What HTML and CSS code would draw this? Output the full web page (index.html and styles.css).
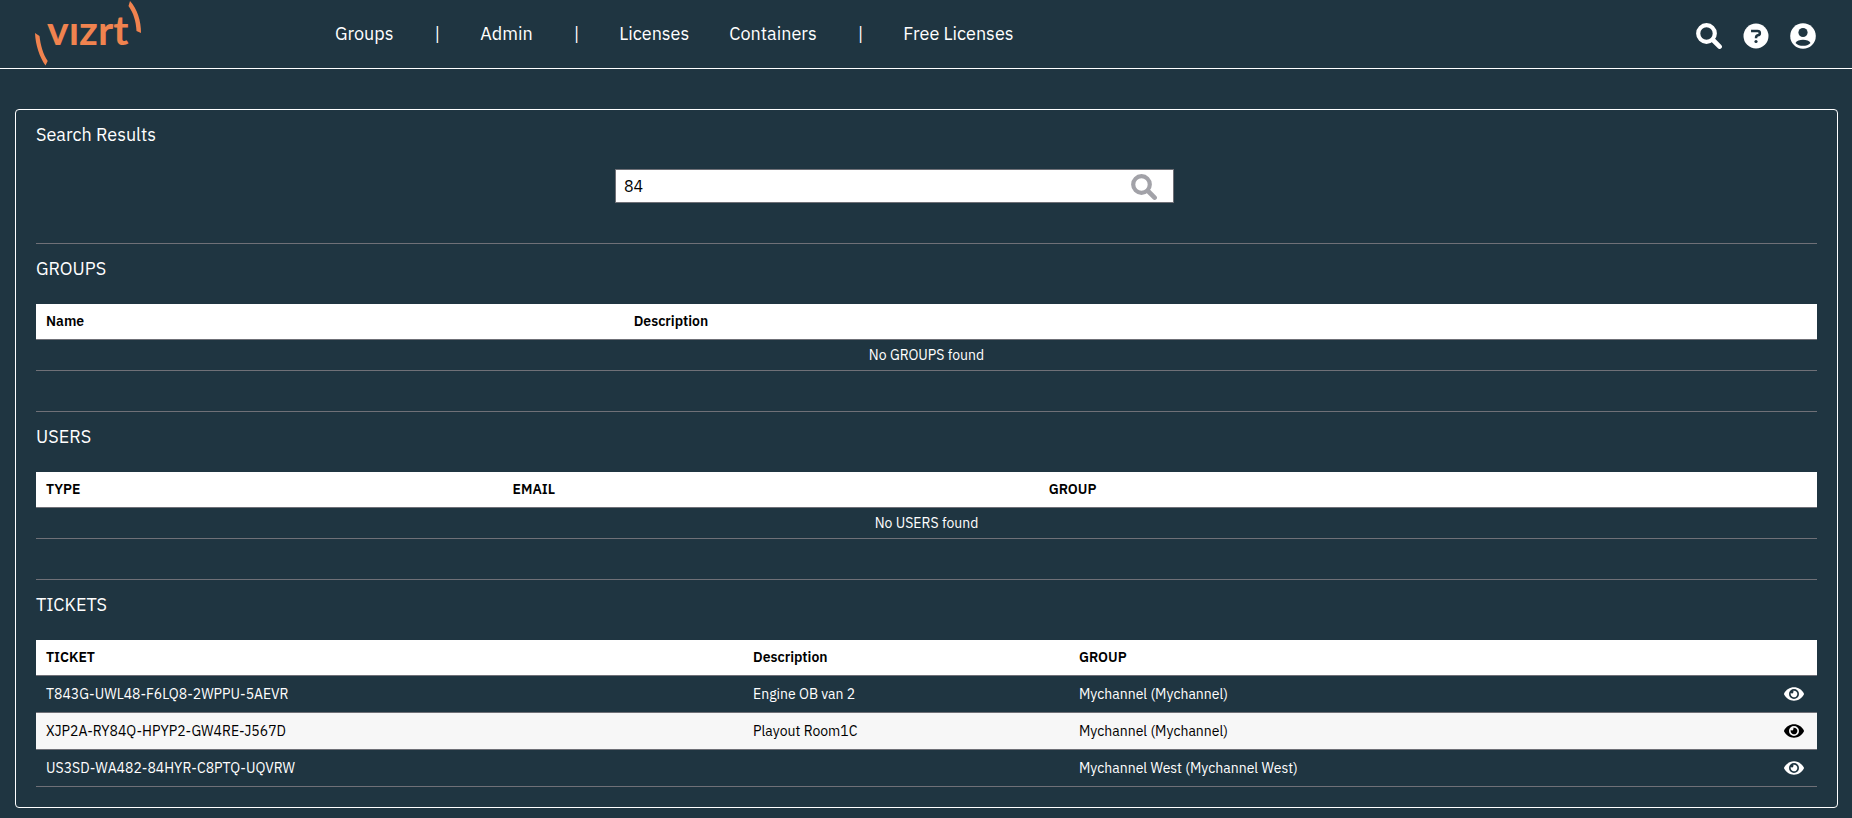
FILE: index.html
```html
<!DOCTYPE html>
<html lang="en">
<head>
<meta charset="utf-8">
<title>Search Results</title>
<link rel="stylesheet" href="styles.css">
</head>
<body>
<svg class="defs" aria-hidden="true">
  <symbol id="search" viewBox="0 0 26 26"><circle cx="10.5" cy="10.5" r="8.3" fill="none" stroke="currentColor" stroke-width="4.2"/><path d="M17 17l6.600 6.600" fill="none" stroke="currentColor" stroke-width="4.600" stroke-linecap="round"/></symbol>
  <symbol id="eye" viewBox="0 0 576 512"><path fill="currentColor" d="M572.520 241.400C518.290 135.590 410.930 64 288 64S57.680 135.640 3.480 241.410a32.350 32.350 0 0 0 0 29.190C57.710 376.410 165.070 448 288 448s230.320-71.640 284.520-177.410a32.350 32.350 0 0 0 0-29.190zM288 400a144 144 0 1 1 144-144 143.930 143.930 0 0 1-144 144zm0-240a95.310 95.310 0 0 0-25.310 3.790 47.850 47.850 0 0 1-66.900 66.900A95.780 95.780 0 1 0 288 160z"/></symbol>
</svg>
<header class="topbar">
  <a class="logo" href="#" aria-label="vizrt">
    <svg width="108" height="68" viewBox="0 0 108 68">
      <path d="M0 33L4.500 36C5.500 45 8 54 12.700 61L10.500 65.500C4.500 57 .5 45 0 33Z"/>
      <path d="M95 1L93.500 6C98.500 13 101 21 101.500 31L106 33C106.200 21 102 8.500 95 1Z"/>
      <text x="12" y="45">vızrt</text>
    </svg>
  </a>
  <nav class="nav">
    <a href="#">Groups</a><span>|</span>
    <a href="#">Admin</a><span>|</span>
    <a href="#">Licenses</a>
    <a href="#">Containers</a><span>|</span>
    <a href="#">Free Licenses</a>
  </nav>
  <div class="actions">
    <button aria-label="Search"><svg class="icon"><use href="#search"/></svg></button>
    <button aria-label="Help"><svg class="icon" viewBox="0 0 26 26"><circle cx="13" cy="13" r="12.500" fill="currentColor"/><path class="cut-line" d="M9.300 9.300V8H14.500C17.600 8 17.600 12 14.800 12.300C13.500 12.500 13 13 13 15.200"/><circle class="cut" cx="13" cy="18.500" r="1.600"/></svg></button>
    <button aria-label="Account"><svg class="icon" viewBox="0 0 26 26"><circle cx="13" cy="13" r="12.800" fill="currentColor"/><circle class="cut" cx="13" cy="9.500" r="4.600"/><path class="cut" d="M5.500 20C7.500 15.800 18.500 15.800 20.500 20C17 23.800 9 23.800 5.500 20Z"/></svg></button>
  </div>
</header>
<main class="panel">
  <h1>Search Results</h1>
  <form class="search-row">
    <div class="search-box">
      <input type="text" value="84" aria-label="Search">
      <button type="button" aria-label="Search"><svg class="icon"><use href="#search"/></svg></button>
    </div>
  </form>
  <section>
    <h2>GROUPS</h2>
    <table>
      <colgroup><col class="w-33"><col></colgroup>
      <thead><tr><th>Name</th><th>Description</th></tr></thead>
      <tbody><tr class="empty"><td colspan="2">No GROUPS found</td></tr></tbody>
    </table>
  </section>
  <section>
    <h2>USERS</h2>
    <table>
      <colgroup><col class="w-26"><col class="w-30"><col></colgroup>
      <thead><tr><th>TYPE</th><th>EMAIL</th><th>GROUP</th></tr></thead>
      <tbody><tr class="empty"><td colspan="3">No USERS found</td></tr></tbody>
    </table>
  </section>
  <section>
    <h2>TICKETS</h2>
    <table class="tickets">
      <colgroup><col class="w-39"><col class="w-18"><col><col class="w-action"></colgroup>
      <thead><tr><th>TICKET</th><th>Description</th><th>GROUP</th><th></th></tr></thead>
      <tbody>
        <tr><td>T843G-UWL48-F6LQ8-2WPPU-5AEVR</td><td>Engine OB van 2</td><td>Mychannel (Mychannel)</td><td><button aria-label="View"><svg class="eye"><use href="#eye"/></svg></button></td></tr>
        <tr><td>XJP2A-RY84Q-HPYP2-GW4RE-J567D</td><td>Playout Room1C</td><td>Mychannel (Mychannel)</td><td><button aria-label="View"><svg class="eye"><use href="#eye"/></svg></button></td></tr>
        <tr><td>US3SD-WA482-84HYR-C8PTQ-UQVRW</td><td></td><td>Mychannel West (Mychannel West)</td><td><button aria-label="View"><svg class="eye"><use href="#eye"/></svg></button></td></tr>
      </tbody>
    </table>
  </section>
</main>
</body>
</html>
```
FILE: styles.css
```css
:root {
  --bg: #1f3541;
  --line: #6f7077;
}
* { box-sizing: border-box; }
body {
  margin: 0;
  background: var(--bg);
  color: #fff;
  font: 14px/20px "IBM Plex Sans", "Noto Sans", sans-serif;
}
.defs { display: none; }
button {
  display: block;
  padding: 0;
  border: 0;
  background: none;
  color: inherit;
  cursor: pointer;
}
.icon { display: block; width: 26px; height: 26px; }
.cut { fill: var(--bg); }
.cut-line { fill: none; stroke: var(--bg); stroke-width: 2.5; }

.topbar {
  display: flex;
  align-items: center;
  height: 69px;
  padding: 0 36px 0 35px;
  border-bottom: 1px solid #fff;
}
.logo { width: 300px; }
.logo svg { display: block; fill: #f0834f; }
.logo text { font: bold 41px Lato, sans-serif; }
.nav {
  display: flex;
  gap: 40px;
  font-size: 18px;
  line-height: 24px;
}
.nav a { color: #fff; text-decoration: none; }
.nav span { padding-left: 1px; }
.actions {
  display: flex;
  gap: 21px;
  margin-left: auto;
  padding-top: 4px;
}

.panel {
  margin: 40px 14px 10px 15px;
  padding: 12px 20px 20px;
  border: 1px solid #fff;
  border-radius: 4px;
}
h1, h2 {
  margin: 0;
  font-size: 18px;
  font-weight: 400;
  line-height: 26px;
}
.search-row {
  display: grid;
  grid-template-columns: 579fr 559fr 643fr;
  margin: 21px 0 40px;
}
.search-box { position: relative; grid-column: 2; }
.search-box input {
  display: block;
  width: 100%;
  height: 34px;
  padding: 0 8px;
  border: 1px solid var(--line);
  background: #fff;
  color: #000;
  font: inherit;
  font-size: 16px;
}
.search-box button {
  position: absolute;
  top: 5px;
  right: 17px;
  color: #a2a2a8;
}

section { border-top: 1px solid var(--line); padding-top: 12px; }
section + section { margin-top: 40px; }
h2 { margin-bottom: 22px; }
table {
  width: 100%;
  border-collapse: separate;
  border-spacing: 0;
  table-layout: fixed;
}
th, td {
  height: 31px;
  padding: 0 10px;
  border-bottom: 1px solid var(--line);
  text-align: left;
}
th {
  height: 36px;
  padding-bottom: 2px;
  background: #fff;
  color: #000;
  font-weight: 600;
}
.empty td { text-align: center; }
.tickets td { height: 37px; }
.tickets tbody tr:nth-child(even) { background: #f7f7f7; color: #000; }
.w-33 { width: 33%; }
.w-26 { width: 26.2%; }
.w-30 { width: 30.1%; }
.w-39 { width: 39.7%; }
.w-18 { width: 18.3%; }
.w-action { width: 43px; }
.eye { display: block; width: 20px; height: 18px; }
```
